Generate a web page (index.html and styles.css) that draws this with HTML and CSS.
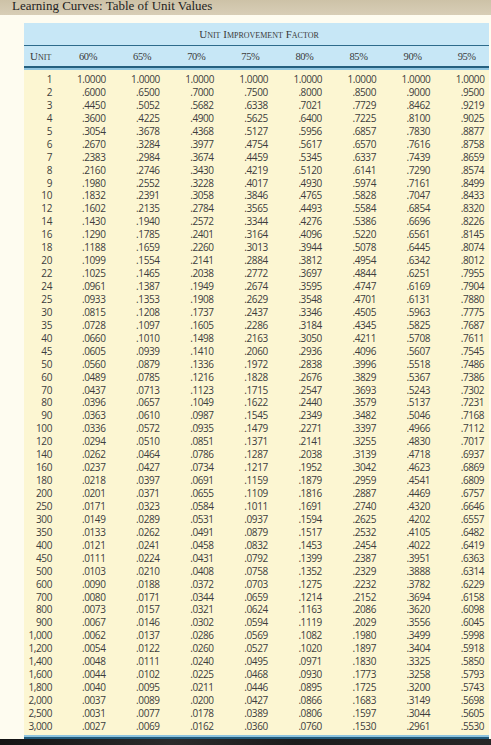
FILE: index.html
```html
<!DOCTYPE html>
<html lang="en">
<head>
<meta charset="utf-8">
<title>Learning Curves: Table of Unit Values</title>
<link rel="stylesheet" href="styles.css">
</head>
<body>
<header class="titlebar"><h1 class="title">Learning Curves: Table of Unit Values</h1></header>
<main class="page">
<table class="curves">
<colgroup><col class="c-unit"><col class="c-val"><col class="c-val"><col class="c-val"><col class="c-val"><col class="c-val"><col class="c-val"><col class="c-val"><col></colgroup>
<thead>
<tr class="group"><th colspan="9">Unit Improvement Factor</th></tr>
<tr class="cols"><th class="unit-h">Unit</th><th>60%</th><th>65%</th><th>70%</th><th>75%</th><th>80%</th><th>85%</th><th>90%</th><th>95%</th></tr>
<tr class="rule"><td colspan="9"></td></tr>
</thead>
<tbody>
<tr class="first"><td>1</td><td>1.0000</td><td>1.0000</td><td>1.0000</td><td>1.0000</td><td>1.0000</td><td>1.0000</td><td>1.0000</td><td>1.0000</td></tr>
<tr><td>2</td><td>.6000</td><td>.6500</td><td>.7000</td><td>.7500</td><td>.8000</td><td>.8500</td><td>.9000</td><td>.9500</td></tr>
<tr><td>3</td><td>.4450</td><td>.5052</td><td>.5682</td><td>.6338</td><td>.7021</td><td>.7729</td><td>.8462</td><td>.9219</td></tr>
<tr><td>4</td><td>.3600</td><td>.4225</td><td>.4900</td><td>.5625</td><td>.6400</td><td>.7225</td><td>.8100</td><td>.9025</td></tr>
<tr><td>5</td><td>.3054</td><td>.3678</td><td>.4368</td><td>.5127</td><td>.5956</td><td>.6857</td><td>.7830</td><td>.8877</td></tr>
<tr><td>6</td><td>.2670</td><td>.3284</td><td>.3977</td><td>.4754</td><td>.5617</td><td>.6570</td><td>.7616</td><td>.8758</td></tr>
<tr><td>7</td><td>.2383</td><td>.2984</td><td>.3674</td><td>.4459</td><td>.5345</td><td>.6337</td><td>.7439</td><td>.8659</td></tr>
<tr><td>8</td><td>.2160</td><td>.2746</td><td>.3430</td><td>.4219</td><td>.5120</td><td>.6141</td><td>.7290</td><td>.8574</td></tr>
<tr><td>9</td><td>.1980</td><td>.2552</td><td>.3228</td><td>.4017</td><td>.4930</td><td>.5974</td><td>.7161</td><td>.8499</td></tr>
<tr><td>10</td><td>.1832</td><td>.2391</td><td>.3058</td><td>.3846</td><td>.4765</td><td>.5828</td><td>.7047</td><td>.8433</td></tr>
<tr><td>12</td><td>.1602</td><td>.2135</td><td>.2784</td><td>.3565</td><td>.4493</td><td>.5584</td><td>.6854</td><td>.8320</td></tr>
<tr><td>14</td><td>.1430</td><td>.1940</td><td>.2572</td><td>.3344</td><td>.4276</td><td>.5386</td><td>.6696</td><td>.8226</td></tr>
<tr><td>16</td><td>.1290</td><td>.1785</td><td>.2401</td><td>.3164</td><td>.4096</td><td>.5220</td><td>.6561</td><td>.8145</td></tr>
<tr><td>18</td><td>.1188</td><td>.1659</td><td>.2260</td><td>.3013</td><td>.3944</td><td>.5078</td><td>.6445</td><td>.8074</td></tr>
<tr><td>20</td><td>.1099</td><td>.1554</td><td>.2141</td><td>.2884</td><td>.3812</td><td>.4954</td><td>.6342</td><td>.8012</td></tr>
<tr><td>22</td><td>.1025</td><td>.1465</td><td>.2038</td><td>.2772</td><td>.3697</td><td>.4844</td><td>.6251</td><td>.7955</td></tr>
<tr><td>24</td><td>.0961</td><td>.1387</td><td>.1949</td><td>.2674</td><td>.3595</td><td>.4747</td><td>.6169</td><td>.7904</td></tr>
<tr><td>25</td><td>.0933</td><td>.1353</td><td>.1908</td><td>.2629</td><td>.3548</td><td>.4701</td><td>.6131</td><td>.7880</td></tr>
<tr><td>30</td><td>.0815</td><td>.1208</td><td>.1737</td><td>.2437</td><td>.3346</td><td>.4505</td><td>.5963</td><td>.7775</td></tr>
<tr><td>35</td><td>.0728</td><td>.1097</td><td>.1605</td><td>.2286</td><td>.3184</td><td>.4345</td><td>.5825</td><td>.7687</td></tr>
<tr><td>40</td><td>.0660</td><td>.1010</td><td>.1498</td><td>.2163</td><td>.3050</td><td>.4211</td><td>.5708</td><td>.7611</td></tr>
<tr><td>45</td><td>.0605</td><td>.0939</td><td>.1410</td><td>.2060</td><td>.2936</td><td>.4096</td><td>.5607</td><td>.7545</td></tr>
<tr><td>50</td><td>.0560</td><td>.0879</td><td>.1336</td><td>.1972</td><td>.2838</td><td>.3996</td><td>.5518</td><td>.7486</td></tr>
<tr><td>60</td><td>.0489</td><td>.0785</td><td>.1216</td><td>.1828</td><td>.2676</td><td>.3829</td><td>.5367</td><td>.7386</td></tr>
<tr><td>70</td><td>.0437</td><td>.0713</td><td>.1123</td><td>.1715</td><td>.2547</td><td>.3693</td><td>.5243</td><td>.7302</td></tr>
<tr><td>80</td><td>.0396</td><td>.0657</td><td>.1049</td><td>.1622</td><td>.2440</td><td>.3579</td><td>.5137</td><td>.7231</td></tr>
<tr><td>90</td><td>.0363</td><td>.0610</td><td>.0987</td><td>.1545</td><td>.2349</td><td>.3482</td><td>.5046</td><td>.7168</td></tr>
<tr><td>100</td><td>.0336</td><td>.0572</td><td>.0935</td><td>.1479</td><td>.2271</td><td>.3397</td><td>.4966</td><td>.7112</td></tr>
<tr><td>120</td><td>.0294</td><td>.0510</td><td>.0851</td><td>.1371</td><td>.2141</td><td>.3255</td><td>.4830</td><td>.7017</td></tr>
<tr><td>140</td><td>.0262</td><td>.0464</td><td>.0786</td><td>.1287</td><td>.2038</td><td>.3139</td><td>.4718</td><td>.6937</td></tr>
<tr><td>160</td><td>.0237</td><td>.0427</td><td>.0734</td><td>.1217</td><td>.1952</td><td>.3042</td><td>.4623</td><td>.6869</td></tr>
<tr><td>180</td><td>.0218</td><td>.0397</td><td>.0691</td><td>.1159</td><td>.1879</td><td>.2959</td><td>.4541</td><td>.6809</td></tr>
<tr><td>200</td><td>.0201</td><td>.0371</td><td>.0655</td><td>.1109</td><td>.1816</td><td>.2887</td><td>.4469</td><td>.6757</td></tr>
<tr><td>250</td><td>.0171</td><td>.0323</td><td>.0584</td><td>.1011</td><td>.1691</td><td>.2740</td><td>.4320</td><td>.6646</td></tr>
<tr><td>300</td><td>.0149</td><td>.0289</td><td>.0531</td><td>.0937</td><td>.1594</td><td>.2625</td><td>.4202</td><td>.6557</td></tr>
<tr><td>350</td><td>.0133</td><td>.0262</td><td>.0491</td><td>.0879</td><td>.1517</td><td>.2532</td><td>.4105</td><td>.6482</td></tr>
<tr><td>400</td><td>.0121</td><td>.0241</td><td>.0458</td><td>.0832</td><td>.1453</td><td>.2454</td><td>.4022</td><td>.6419</td></tr>
<tr><td>450</td><td>.0111</td><td>.0224</td><td>.0431</td><td>.0792</td><td>.1399</td><td>.2387</td><td>.3951</td><td>.6363</td></tr>
<tr><td>500</td><td>.0103</td><td>.0210</td><td>.0408</td><td>.0758</td><td>.1352</td><td>.2329</td><td>.3888</td><td>.6314</td></tr>
<tr><td>600</td><td>.0090</td><td>.0188</td><td>.0372</td><td>.0703</td><td>.1275</td><td>.2232</td><td>.3782</td><td>.6229</td></tr>
<tr><td>700</td><td>.0080</td><td>.0171</td><td>.0344</td><td>.0659</td><td>.1214</td><td>.2152</td><td>.3694</td><td>.6158</td></tr>
<tr><td>800</td><td>.0073</td><td>.0157</td><td>.0321</td><td>.0624</td><td>.1163</td><td>.2086</td><td>.3620</td><td>.6098</td></tr>
<tr><td>900</td><td>.0067</td><td>.0146</td><td>.0302</td><td>.0594</td><td>.1119</td><td>.2029</td><td>.3556</td><td>.6045</td></tr>
<tr><td>1,000</td><td>.0062</td><td>.0137</td><td>.0286</td><td>.0569</td><td>.1082</td><td>.1980</td><td>.3499</td><td>.5998</td></tr>
<tr><td>1,200</td><td>.0054</td><td>.0122</td><td>.0260</td><td>.0527</td><td>.1020</td><td>.1897</td><td>.3404</td><td>.5918</td></tr>
<tr><td>1,400</td><td>.0048</td><td>.0111</td><td>.0240</td><td>.0495</td><td>.0971</td><td>.1830</td><td>.3325</td><td>.5850</td></tr>
<tr><td>1,600</td><td>.0044</td><td>.0102</td><td>.0225</td><td>.0468</td><td>.0930</td><td>.1773</td><td>.3258</td><td>.5793</td></tr>
<tr><td>1,800</td><td>.0040</td><td>.0095</td><td>.0211</td><td>.0446</td><td>.0895</td><td>.1725</td><td>.3200</td><td>.5743</td></tr>
<tr><td>2,000</td><td>.0037</td><td>.0089</td><td>.0200</td><td>.0427</td><td>.0866</td><td>.1683</td><td>.3149</td><td>.5698</td></tr>
<tr><td>2,500</td><td>.0031</td><td>.0077</td><td>.0178</td><td>.0389</td><td>.0806</td><td>.1597</td><td>.3044</td><td>.5605</td></tr>
<tr class="last"><td>3,000</td><td>.0027</td><td>.0069</td><td>.0162</td><td>.0360</td><td>.0760</td><td>.1530</td><td>.2961</td><td>.5530</td></tr>
</tbody>
<tfoot>
<tr class="rule-dark"><td colspan="9"></td></tr>
</tfoot>
</table>
</main>
<footer class="bezel"></footer>
</body>
</html>
```
FILE: styles.css
```css
html, body {
  margin: 0;
  padding: 0;
}
body {
  background: #fefcf0;
  overflow: hidden;
  height: 745px;
}
.titlebar {
  height: 15px;
  background: linear-gradient(#cdc2a7, #d8ceb7);
  overflow: hidden;
}
.title {
  margin: -2px 0 0 12px;
  font: normal 13px/15px "Liberation Serif", serif;
  color: #1e1e1e;
}
.page {
  padding: 8px 2px 0 24px;
}
.curves {
  width: 465px;
  table-layout: fixed;
  border-collapse: collapse;
  border-spacing: 0;
}
.c-unit { width: 50px; }
.c-val { width: 54.1px; }

.curves th {
  padding: 0;
  background: #c7e7f6;
  font-family: "Liberation Serif", serif;
  font-weight: normal;
  color: #3a3a3a;
}
.group th {
  height: 22px;
  font-size: 11px;
  font-variant: small-caps;
  text-align: center;
  padding-left: 5px;
  border-bottom: 1px solid #2d6b8b;
}
.cols th {
  height: 20px;
  font-size: 10.5px;
  text-align: left;
  padding-left: 5px;
  letter-spacing: -0.4px;
  border-bottom: 2px solid #24607f;
}
.cols th.unit-h {
  font-size: 11px;
  font-variant: small-caps;
  letter-spacing: 0;
  padding-left: 6px;
}
.rule td {
  height: 2px;
  padding: 0;
  background: #8ec4df;
}
.curves tbody td {
  padding: 0 0 0 8px;
  height: 12.94px;
  line-height: 12.94px;
  background: #fcf6d2;
  font-family: "Open Sans", sans-serif;
  font-size: 10px;
  letter-spacing: -0.4px;
  color: #3d3d3d;
  white-space: nowrap;
}
.curves tbody td:first-child {
  padding: 0 22px 0 0;
  text-align: right;
}
.curves tbody tr.first td {
  padding-top: 3px;
  text-indent: -5px;
}
.curves tbody tr.first td:first-child {
  text-indent: 0;
}
.curves tbody tr.last td {
  padding-bottom: 2px;
  border-bottom: 2px solid #8ec4df;
}
.rule-dark td {
  height: 2px;
  padding: 0;
  background: #235c7b;
}
.bezel {
  height: 12px;
  background: linear-gradient(90deg, #141414 0%, #2b2b2b 35%, #1c1c1c 60%, #262626 100%);
}
```
